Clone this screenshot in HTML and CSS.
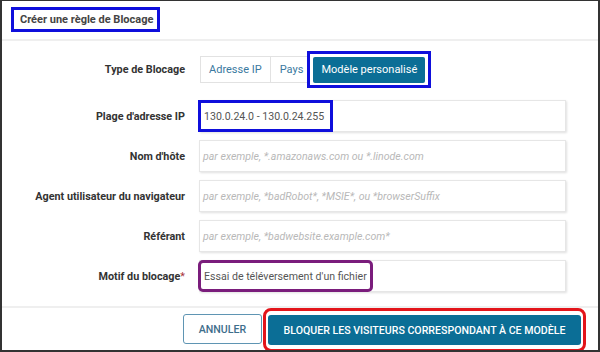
FILE: index.html
```html
<!DOCTYPE html>
<html lang="fr">
<head>
    <meta charset="UTF-8">
    <meta name="viewport" content="width=device-width, initial-scale=1.0">
    <title>Créer une règle de Blocage</title>
    <link rel="stylesheet" href="styles.css">
</head>
<body>
    <div class="dialog">
        <div class="dialog-head">
            <h1 class="title mark-blue">Créer une règle de Blocage</h1>
        </div>

        <div class="form">
            <div class="row row-type">
                <label class="label">Type de Blocage</label>
                <div class="seg">
                    <span class="seg-btn">Adresse IP</span>
                    <span class="seg-btn seg-pays">Pays</span>
                    <span class="mark-blue seg-mark">
                        <span class="seg-btn seg-active">Modèle personalisé</span>
                    </span>
                </div>
            </div>
            <div class="row">
                <label class="label">Plage d'adresse IP</label>
                <div class="field">
                    <span class="mark-blue value-mark">130.0.24.0 - 130.0.24.255</span>
                </div>
            </div>
            <div class="row">
                <label class="label">Nom d'hôte</label>
                <div class="field"><span class="ph">par exemple, *.amazonaws.com ou *.linode.com</span></div>
            </div>
            <div class="row">
                <label class="label">Agent utilisateur du navigateur</label>
                <div class="field"><span class="ph">par exemple, *badRobot*, *MSIE*, ou *browserSuffix</span></div>
            </div>
            <div class="row">
                <label class="label">Référant</label>
                <div class="field"><span class="ph">par exemple, *badwebsite.example.com*</span></div>
            </div>
            <div class="row">
                <label class="label">Motif du blocage<span class="req">*</span></label>
                <div class="field">
                    <span class="mark-purple value-mark motif-mark">Essai de téléversement d'un fichier</span>
                </div>
            </div>
        </div>

        <div class="dialog-foot">
            <button class="btn btn-cancel">ANNULER</button>
            <span class="mark-red">
                <button class="btn btn-primary">BLOQUER LES VISITEURS CORRESPONDANT À CE MODÈLE</button>
            </span>
        </div>
    </div>
</body>
</html>
```

FILE: styles.css
```css
*{
    margin: 0;
    padding: 0;
    box-sizing: border-box;
}
body{
    width: 600px;
    height: 352px;
    overflow: hidden;
    background: #fff;
    font-family: Roboto, "Liberation Sans", sans-serif;
    color: #444;
}
.dialog {
    width: 600px;
    height: 352px;
    border: 2px solid #333;
    border-top-width: 1px;
    display: flex;
    flex-direction: column;
    overflow: hidden;
}

/* header */
.dialog-head {
    height: 40px;
    padding: 6px 0 0 9px;
    border-bottom: 2px solid #efefef;
}
.title {
    display: inline-block;
    width: 149px;
    height: 25px;
    padding: 0 0 0 6px;
    line-height: 19px;
    font-size: 11px;
    font-weight: 700;
    color: #444;
    white-space: nowrap;
}

/* highlight boxes */
.mark-blue {
    border: 3px solid #0f0fdc;
}
.mark-purple {
    border: 3px solid #7a1d7c;
    border-radius: 5px;
}
.mark-red {
    border: 3px solid #e3151b;
    border-radius: 8px;
    padding: 4px 2px;
    display: flex;
    margin-bottom: -2px;
}

/* form */
.form {
    padding: 10px 32px 14px 0;
    display: flex;
    flex-direction: column;
    gap: 8px;
}
.row {
    display: grid;
    grid-template-columns: 183px 1fr;
    column-gap: 14px;
    align-items: center;
    height: 32px;
}
.row-type {
    height: 37px;
    margin-bottom: 4px;
}
.label {
    text-align: right;
    font-size: 10.8px;
    font-weight: 700;
    color: #333;
}
.req {
    color: #a8323a;
    font-weight: 400;
}

.seg {
    display: flex;
    align-items: center;
    margin-left: 1px;
}
.seg-btn {
    height: 27px;
    line-height: 25px;
    padding: 0 8px;
    font-size: 11px;
    color: #3a79a0;
    border: 1px solid #e2e2e2;
    background: #fff;
}
.seg-btn + .seg-btn {
    border-left: 0;
}
.seg-pays {
    padding: 0 4px 0 9px;
}
.seg-mark {
    height: 37px;
    padding: 3px 3px;
    margin-left: -1px;
    display: flex;
    align-items: center;
}
.seg-active {
    width: 112px;
    height: 26px;
    line-height: 26px;
    border: 0;
    border-radius: 2px;
    padding: 0;
    text-align: center;
    background: #0b6e96;
    color: #fff;
}

.field {
    height: 32px;
    border: 1px solid #e6e6e6;
    box-shadow: 1px 1px 2px rgba(0, 0, 0, 0.12);
    display: flex;
    align-items: center;
    font-size: 10.6px;
    color: #555;
}
.ph {
    padding-left: 3px;
    font-style: italic;
    color: #b8b8b8;
}
.value-mark {
    align-self: stretch;
    margin: -1px 0 -1px -2px;
    padding: 0 6px 0 3px;
    display: flex;
    align-items: center;
    color: #555;
}
.motif-mark {
    padding: 0 3px 0 3px;
}

/* footer */
.dialog-foot {
    flex: 1;
    border-top: 2px solid #efefef;
    display: flex;
    justify-content: flex-end;
    align-items: center;
    gap: 1px;
    padding-right: 12px;
}
.btn {
    height: 30px;
    font-family: Roboto, "Liberation Sans", sans-serif;
    font-size: 10.6px;
    font-weight: 500;
    border-radius: 3px;
    cursor: pointer;
}
.btn-cancel {
    width: 79px;
    background: #fff;
    border: 1px solid #5f95b3;
    color: #3e6e8b;
}
.btn-primary {
    width: 313px;
    border: 0;
    background: #0b6e96;
    color: #fff;
}
```
